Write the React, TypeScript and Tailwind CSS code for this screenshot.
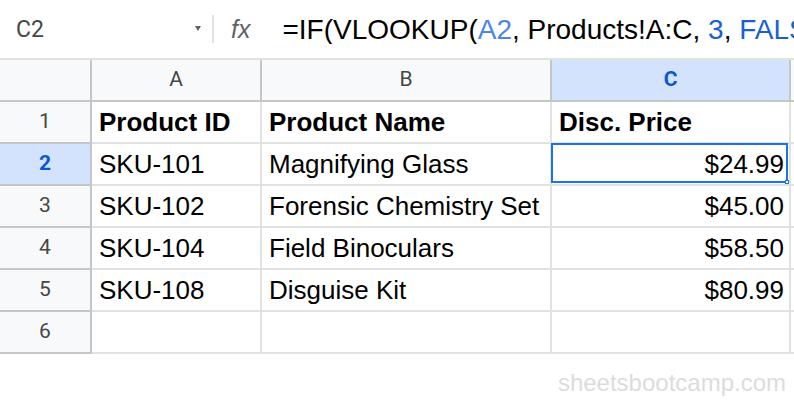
import React from 'react';

const rows = [
  { n: 1, a: 'Product ID', b: 'Product Name', c: 'Disc. Price', bold: true },
  { n: 2, a: 'SKU-101', b: 'Magnifying Glass', c: '$24.99' },
  { n: 3, a: 'SKU-102', b: 'Forensic Chemistry Set', c: '$45.00' },
  { n: 4, a: 'SKU-104', b: 'Field Binoculars', c: '$58.50' },
  { n: 5, a: 'SKU-108', b: 'Disguise Kit', c: '$80.99' },
  { n: 6, a: '', b: '', c: '' },
];

const cellFont = { fontFamily: '"Liberation Sans", Arial, sans-serif' };
const uiFont = { fontFamily: 'Roboto, "Liberation Sans", Arial, sans-serif' };

export default function App() {
  return (
    <div className="w-[794px] h-[414px] bg-white overflow-hidden">
      {/* formula bar */}
      <div className="flex items-center h-[60px] border-b-2 border-[#e1e3e1] overflow-hidden">
        <div className="flex items-center shrink-0 w-[212px] pl-[16px] pr-[11px]">
          <span className="text-[23px] text-[#444746] leading-none" style={uiFont}>C2</span>
          <span className="ml-auto w-0 h-0 border-l-[3px] border-r-[3px] border-t-[5px] border-l-transparent border-r-transparent border-t-[#5f6368] mt-[-2px]" />
        </div>
        <div className="shrink-0 w-[2px] h-[28px] bg-[#e1e3e1]" />
        <span className="shrink-0 ml-[17px] italic text-[25px] text-[#5f6368] leading-none" style={cellFont}>fx</span>
        <div className="ml-[32px] min-w-0 flex-1 overflow-hidden whitespace-nowrap text-[28px] text-black leading-none pt-[1px]" style={cellFont}>
          =IF(VLOOKUP(<span className="text-[#4a86e8]">A2</span>, Products!A:C, <span className="text-[#1a5fd4]">3</span>, <span className="text-[#1a5fd4]">FALSE</span>
        </div>
      </div>

      {/* grid */}
      <div className="grid grid-cols-[92px_170px_290px_239px_1fr]">
        {/* column header row */}
        <div className="h-[42px] bg-[#f8f9fa] border-r-2 border-b-2 border-[#c4c7c5]" />
        <div className="h-[42px] bg-[#f8f9fa] border-r-2 border-b-2 border-[#c4c7c5] flex items-center justify-center text-[21px] text-[#444746]" style={uiFont}>A</div>
        <div className="h-[42px] bg-[#f8f9fa] border-r-2 border-b-2 border-[#c4c7c5] flex items-center justify-center text-[21px] text-[#444746]" style={uiFont}>B</div>
        <div className="h-[42px] bg-[#d3e3fd] border-r-2 border-b-2 border-[#c4c7c5] flex items-center justify-center text-[21px] font-bold text-[#0b57d0]" style={uiFont}>C</div>
        <div className="h-[42px] bg-[#f8f9fa] border-b-2 border-[#c4c7c5]" />

        {rows.map((r) => {
          const active = r.n === 2;
          return (
            <React.Fragment key={r.n}>
              <div
                className={
                  active
                    ? 'h-[42px] bg-[#d3e3fd] border-r-2 border-b-2 border-[#c4c7c5] flex items-center justify-center text-[21px] font-bold text-[#0b57d0]'
                    : 'h-[42px] bg-[#f8f9fa] border-r-2 border-b-2 border-[#c4c7c5] flex items-center justify-center text-[21px] text-[#444746]'
                }
                style={uiFont}
              >
                {r.n}
              </div>
              <div
                className={
                  r.bold
                    ? 'h-[42px] border-r-2 border-b-2 border-[#e1e3e1] flex items-center pl-[7px] pt-[1px] text-[26px] font-bold text-black whitespace-nowrap'
                    : 'h-[42px] border-r-2 border-b-2 border-[#e1e3e1] flex items-center pl-[7px] pt-[1px] text-[26px] text-black whitespace-nowrap'
                }
                style={cellFont}
              >
                {r.a}
              </div>
              <div
                className={
                  r.bold
                    ? 'h-[42px] border-r-2 border-b-2 border-[#e1e3e1] flex items-center pl-[7px] pt-[1px] text-[26px] font-bold text-black whitespace-nowrap'
                    : 'h-[42px] border-r-2 border-b-2 border-[#e1e3e1] flex items-center pl-[7px] pt-[1px] text-[26px] text-black whitespace-nowrap'
                }
                style={cellFont}
              >
                {r.b}
              </div>
              <div
                className={
                  r.bold
                    ? 'relative h-[42px] border-r-2 border-b-2 border-[#e1e3e1] flex items-center pl-[7px] pt-[1px] text-[26px] font-bold text-black whitespace-nowrap'
                    : 'relative h-[42px] border-r-2 border-b-2 border-[#e1e3e1] flex items-center justify-end pr-[5px] pt-[1px] text-[26px] text-black whitespace-nowrap'
                }
                style={cellFont}
              >
                {r.c}
                {active && (
                  <div className="absolute -left-px -top-px right-[1px] bottom-[1px] border-2 border-[#1a73e8] pointer-events-none">
                    <div className="absolute -right-[3px] -bottom-[3px] w-[4px] h-[4px] bg-white border border-[#1a73e8]" />
                  </div>
                )}
              </div>
              <div className="h-[42px] border-b-2 border-[#e1e3e1]" />
            </React.Fragment>
          );
        })}
      </div>

      {/* watermark */}
      <div className="flex justify-end pr-[8px] mt-[15px]">
        <span className="text-[24px] text-[#dcdcdc] leading-[28px]" style={cellFont}>sheetsbootcamp.com</span>
      </div>
    </div>
  );
}
